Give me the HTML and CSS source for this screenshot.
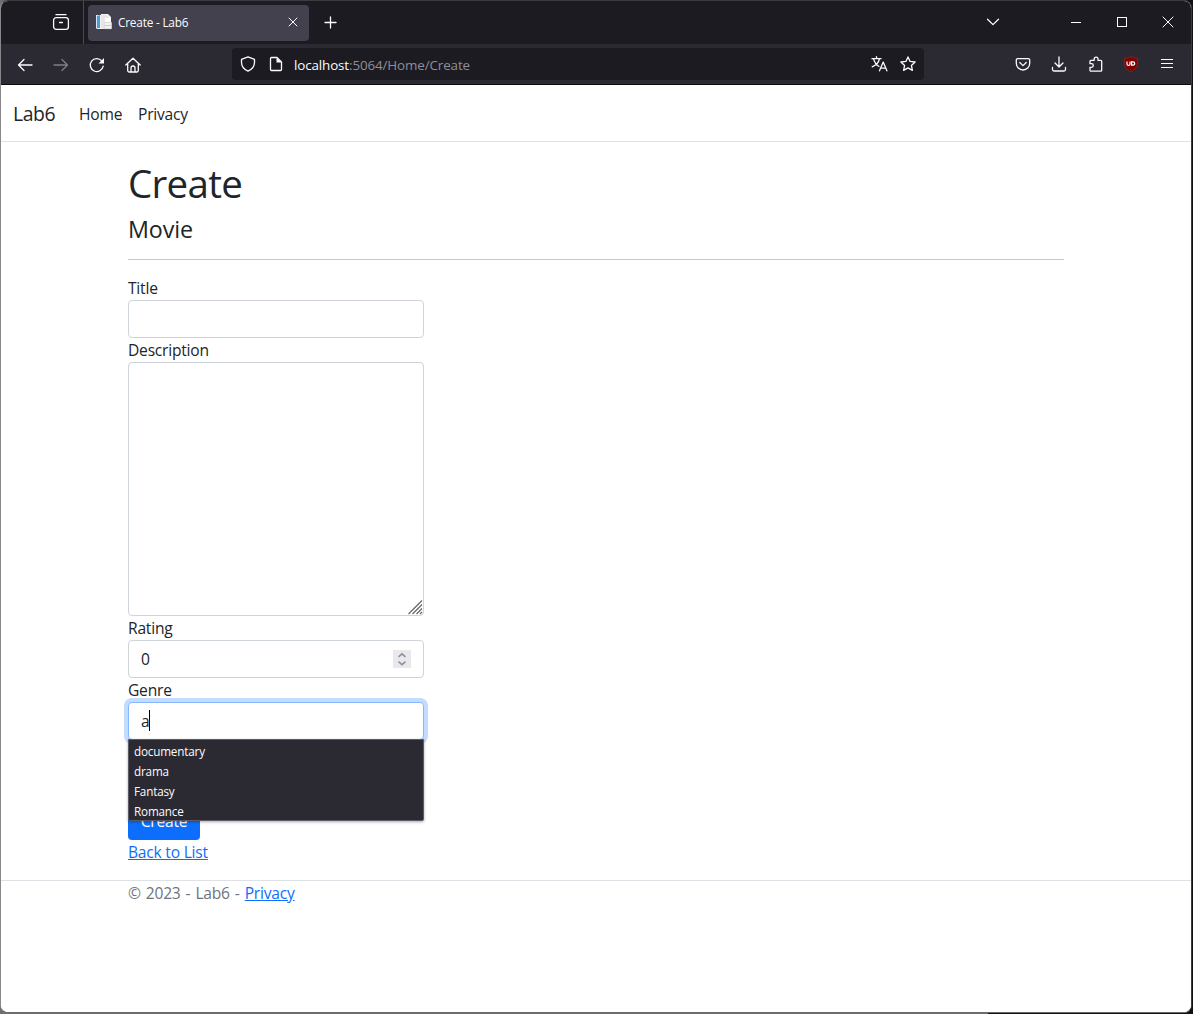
FILE: index.html
```html
<!DOCTYPE html>
<html lang="en">
<head>
<meta charset="utf-8">
<title>Create - Lab6</title>
<link rel="stylesheet" href="styles.css">
</head>
<body>
<div class="window">
  <div class="tabbar">
    <div class="firefox-view">
      <svg class="icon" width="18" height="18" viewBox="0 0 18 18"><path d="M4 1.700h10M4.200 4.600h9.600a2.600 2.600 0 0 1 2.600 2.600v6.600a2.600 2.600 0 0 1-2.600 2.600H4.200a2.600 2.600 0 0 1-2.600-2.600V7.200a2.600 2.600 0 0 1 2.600-2.600zM7.500 9.500h3"/></svg>
    </div>
    <div class="tab">
      <svg width="16" height="16" viewBox="0 0 16 16"><path fill="#f4f4f4" d="M0 1h5V0h7l3 3v12H1L0 14z"/><path fill="#4b9ed3" d="M1 2l3-1v13H1z"/><path fill="#d5eaf6" d="M0 1h1v13H0z"/><path fill="#e6e6e6" d="M5 1h7v13H5z"/><path fill="#fff" d="M9 4h6v4H9z"/><path fill="#f2f2f2" stroke="#ccc" stroke-width=".6" d="M8.300 8.500h7.400v6.200H8.300z"/><path stroke="#ccc" d="M9 11.500h6"/></svg>
      <span class="tab-title">Create - Lab6</span>
      <svg class="icon thin" width="10" height="10" viewBox="0 0 10 10"><path d="M1 1l8 8M9 1L1 9"/></svg>
    </div>
    <svg class="icon new-tab" width="13" height="13" viewBox="0 0 13 13"><path d="M6.500 1v11M1 6.500h11"/></svg>
    <div class="window-controls">
      <svg class="icon" width="14" height="14" viewBox="0 0 14 14"><path d="M1.500 4.200L7 9.600l5.500-5.400"/></svg>
      <svg class="icon crisp minimize" width="12" height="12" viewBox="0 0 12 12"><path d="M1 6.500h10"/></svg>
      <svg class="icon crisp" width="12" height="12" viewBox="0 0 12 12"><path d="M1.500 1.500h9v9h-9z"/></svg>
      <svg class="icon thin" width="12" height="12" viewBox="0 0 12 12"><path d="M1 1l10 10M11 1L1 11"/></svg>
    </div>
  </div>
  <div class="toolbar">
    <div class="nav-buttons">
      <svg class="icon" width="16" height="16" viewBox="0 0 16 16"><path d="M15 8H1.500M7 2.500L1.500 8 7 13.500"/></svg>
      <svg class="icon disabled" width="16" height="16" viewBox="0 0 16 16"><path d="M1 8h13.500M9 2.500L14.500 8 9 13.500"/></svg>
      <svg class="icon" width="16" height="16" viewBox="0 0 16 16"><path d="M14.200 9.200A6.500 6.500 0 1 1 12.800 3.900"/><path class="solid" d="M15 1v5.500H9.500z"/></svg>
      <svg class="icon" width="16" height="16" viewBox="0 0 16 16"><path d="M.8 8L8 1.200 15.200 8M2.700 6.500v7a1.500 1.500 0 0 0 1.500 1.500h7.600a1.500 1.500 0 0 0 1.500-1.500v-7M6 15v-4a2 2 0 0 1 4 0v4"/></svg>
    </div>
    <div class="urlbar">
      <svg class="icon" width="16" height="16" viewBox="0 0 16 16"><path d="M8 .8l6.500 2.600v3.200c0 4-2.800 7-6.500 8.600C4.300 13.600 1.500 10.600 1.500 6.600V3.400z"/></svg>
      <svg class="icon page" width="16" height="16" viewBox="0 0 16 16"><path d="M3.500 1.500H9L13.500 6v7.500a1 1 0 0 1-1 1h-9a1 1 0 0 1-1-1v-11a1 1 0 0 1 1-1z"/><path class="solid" d="M8.500 1.500L13.500 6.500h-5z"/></svg>
      <span class="url"><b>localhost</b>:5064/Home/Create</span>
      <svg class="icon" width="17" height="16" viewBox="0 0 17 16"><path d="M1 2.700h9M5.500.7v2M2.500 2.700c1 4 3.500 6.600 5.500 7.800M8.500 2.700C7.800 6.500 4.500 9.500 1.200 10.800M8.500 14.800L12.200 6.100l3.700 8.700M9.700 12.200h5"/></svg>
      <svg class="icon" width="16" height="16" viewBox="0 0 16 16"><path d="M8 .9l2.100 4.500 5 .6-3.700 3.400 1 5L8 11.900l-4.400 2.500 1-5L.9 6l5-.6z"/></svg>
    </div>
    <div class="extensions">
      <svg class="icon" width="16" height="16" viewBox="0 0 16 16"><path d="M2.800 2.600h10.400a1.500 1.500 0 0 1 1.500 1.500v3.200a6.700 6.700 0 0 1-13.400 0V4.100a1.500 1.500 0 0 1 1.500-1.500zM4.800 6.500L8 9.600l3.200-3.100"/></svg>
      <svg class="icon" width="16" height="16" viewBox="0 0 16 16"><path d="M8 .8v10M4 7l4 4 4-4M1.500 11.500v2a1.500 1.500 0 0 0 1.500 1.500h10a1.500 1.500 0 0 0 1.500-1.500v-2"/></svg>
      <svg class="icon" width="16" height="16" viewBox="0 0 16 16"><path d="M3 15.200h9.700a1 1 0 0 0 1-1V5.300a1 1 0 0 0-1-1H10V3a1.900 1.900 0 0 0-3.800 0v1.300H3a1 1 0 0 0-1 1v2.400h1.500a1.800 1.800 0 0 1 0 3.600H2v2.900a1 1 0 0 0 1 1z"/></svg>
      <svg class="shield" width="16" height="16" viewBox="0 0 16 16"><path fill="#800000" stroke="#a33" stroke-width=".5" d="M8 .5c2 1.300 4 1.700 6.500 1.700v5C14.500 11 12 14 8 15.700 4 14 1.500 11 1.500 7.200v-5C4 2.200 6 1.800 8 .5z"/><path fill="none" stroke="#fff" stroke-width="1.200" d="M4 5.500v2.700c0 1.600 3 1.600 3 0V5.500M8.600 5.900h1.600c2 0 2 3.300 0 3.300H8.600z"/></svg>
      <svg class="icon crisp" width="14" height="14" viewBox="0 0 14 14"><path d="M1 2.500h12M1 6.500h12M1 10.500h12"/></svg>
    </div>
  </div>
  <div class="page-content">
    <header class="navbar">
      <a class="brand">Lab6</a>
      <a class="nav-home">Home</a>
      <a class="nav-privacy">Privacy</a>
    </header>
    <main class="container">
      <h1>Create</h1>
      <h4>Movie</h4>
      <hr>
      <form class="form">
        <label for="title">Title</label>
        <input class="control" id="title">
        <label for="description">Description</label>
        <div class="field">
          <textarea class="control area" id="description"></textarea>
          <svg class="grip" width="15" height="15" viewBox="0 0 15 15"><path d="M.5 14l13.500-13.500M4.500 14l9.500-9.500M8.500 14l5.500-5.500M12 14l2-2"/></svg>
        </div>
        <label for="rating">Rating</label>
        <div class="field">
          <input class="control" id="rating" value="0">
          <span class="spinner"><svg width="18" height="18" viewBox="0 0 18 18"><path d="M5.500 6.800L9 3.800l3.500 3M5.500 11.700L9 14.700l3.500-3"/></svg></span>
        </div>
        <label for="genre">Genre</label>
        <div class="field">
          <input class="control focused" id="genre" value="a">
          <span class="caret"></span>
          <ul class="suggestions"><li>documentary</li><li>drama</li><li>Fantasy</li><li>Romance</li></ul>
        </div>
        <button class="submit" type="button">Create</button>
      </form>
      <a class="link back" href="#">Back to List</a>
    </main>
    <footer class="footer"><div class="container">© 2023 - Lab6 - <a class="link" href="#">Privacy</a></div></footer>
  </div>
</div>
</body>
</html>
```
FILE: styles.css
```css
* { box-sizing: border-box; }
body {
  margin: 0;
  height: 1014px;
  overflow: hidden;
  background: linear-gradient(90deg, #6f6f6f 988px, #101014 988px);
  font-family: "Open Sans", "Noto Sans", sans-serif;
  font-size: 15.6px;
  letter-spacing: -.22px;
  line-height: 24px;
  color: #212529;
}
.window {
  width: 1192px;
  height: 1013px;
  display: flex;
  flex-direction: column;
  border: 1px solid #3c3c40;
  border-left-color: #88888a;
  border-bottom-color: #6b6b6b;
  border-radius: 8px;
  overflow: hidden;
  background: #fff;
}
svg { display: block; flex: none; }
.icon { fill: none; stroke: #fbfbfe; stroke-width: 1.3; stroke-linecap: round; stroke-linejoin: round; }
.icon .solid { fill: #fbfbfe; stroke: none; }
.thin { stroke-width: 1; }
.crisp { stroke-width: 1; shape-rendering: crispEdges; stroke-linecap: butt; }
.disabled { opacity: .4; }

.tabbar { height: 43px; flex: none; display: flex; align-items: center; background: #1c1b22; }
.firefox-view { width: 83px; height: 43px; padding: 12px 0 0 51px; border-right: 1px solid #4b4a52; }
.tab {
  width: 221px;
  height: 36px;
  margin-left: 4px;
  padding: 0 11px 1px 8px;
  display: flex;
  align-items: center;
  border-radius: 4px;
  background: #42414d;
  color: #fbfbfe;
  font-size: 11.8px;
  letter-spacing: -.2px;
}
.tab-title { flex: 1; padding-left: 6px; }
.new-tab { margin-left: 15px; }
.window-controls { margin-left: auto; padding: 0 17px 2px 0; display: flex; align-items: center; gap: 34px; }
.minimize { margin-left: 36px; }

.toolbar {
  height: 41px;
  flex: none;
  display: flex;
  align-items: center;
  border-bottom: 1px solid #0c0c0d;
  background: #2b2a33;
}
.nav-buttons { width: 231px; padding: 1px 0 0 16px; display: flex; gap: 20px; }
.urlbar {
  width: 692px;
  height: 32px;
  padding: 0 8px;
  display: flex;
  align-items: center;
  border-radius: 4px;
  background: #1c1b22;
  color: #8f8e96;
}
.page { margin-left: 12px; }
.url { flex: 1; padding: 2px 0 0 10px; font-size: 13.4px; letter-spacing: -.12px; }
.url b { font-weight: 400; color: #fbfbfe; }
.urlbar .icon:last-child { margin-left: 12px; }
.extensions { flex: 1; padding: 0 17px 0 91px; display: flex; align-items: center; justify-content: space-between; }
.shield { margin: 0 1px 0 -1px; }

.page-content { flex: 1; background: #fff; }
.navbar { height: 57px; padding: 2px 12px 0; display: flex; align-items: center; border-bottom: 1px solid #dee2e6; }
.brand { width: 66px; font-size: 19.4px; letter-spacing: -.4px; }
.nav-home { width: 59px; }
.container { width: 960px; margin: 0 auto; padding: 0 12px; }
main.container { padding-top: 16px; padding-bottom: 16px; }
h1, h4 { margin: 0; font-weight: 400; }
h1 { height: 56px; font-size: 38.5px; line-height: 51px; letter-spacing: -.7px; }
h4 { height: 45px; font-size: 23.3px; line-height: 31px; letter-spacing: -.1px; }
hr { height: 1px; margin: 0 0 16px; border: 0; background: #c8c9ca; }
.form { width: 296px; display: flex; flex-direction: column; align-items: flex-start; }
label { height: 24px; line-height: 25px; }
.field { position: relative; width: 100%; }
.control {
  display: block;
  width: 100%;
  height: 38px;
  padding: 6px 12px;
  border: 1px solid #ced4da;
  border-radius: 4px;
  outline: 0;
  background: #fff;
  color: #212529;
  font: inherit;
  letter-spacing: inherit;
}
.area { height: 254px; resize: none; }
.grip { position: absolute; right: 1px; bottom: 1px; fill: none; stroke: #666; stroke-width: 1.2; }
.spinner { position: absolute; top: 10px; right: 13px; background: #e9e9ed; }
.spinner path { fill: none; stroke: #8f8f9d; stroke-width: 1.6; }
.focused { border-color: #86b7fe; box-shadow: 0 0 0 4px #c2dbfe; }
.caret { position: absolute; left: 21px; top: 8px; width: 1px; height: 21px; background: #000; }
.suggestions {
  position: absolute;
  left: 0;
  top: 37px;
  width: 296px;
  height: 82px;
  margin: 0;
  padding: 1px 5px;
  border: 1px solid #5b5b66;
  border-radius: 0 0 2px 2px;
  background: #2b2a33;
  box-shadow: 0 1px 3px #0005;
  color: #fbfbfe;
  font-size: 11.7px;
  letter-spacing: -.18px;
  line-height: 20px;
  list-style: none;
}
.submit {
  width: 72px;
  height: 38px;
  margin-top: 62px;
  padding: 0;
  border: 0;
  border-radius: 4px;
  background: #0d6efd;
  color: #fff;
  font: inherit;
  letter-spacing: inherit;
}
.link { color: #0d6efd; text-decoration: underline; }
.back { display: block; width: max-content; line-height: 25px; height: 24px; }
.footer { border-top: 1px solid #dee2e6; color: #6c757d; line-height: 25px; word-spacing: 1.2px; }
```
